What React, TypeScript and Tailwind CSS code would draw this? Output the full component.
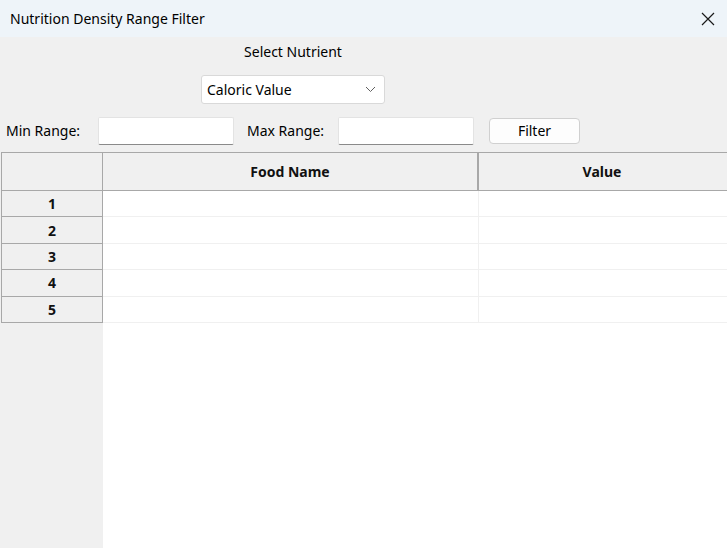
import React from "react";

const font = { fontFamily: '"Noto Sans", "Open Sans", sans-serif' };

const rows = [1, 2, 3, 4, 5];

export default function App() {
  return (
    <div className="w-[727px] h-[548px] overflow-hidden bg-[#f0f0f0] flex flex-col text-[14px] text-black" style={font}>
      {/* Title bar */}
      <div className="h-[37px] shrink-0 bg-[#eef4f9] flex items-center justify-between pl-[10px] pr-[11px]">
        <span className="text-[14px]">Nutrition Density Range Filter</span>
        <svg width="14" height="14" viewBox="0 0 14 14" className="mr-[1px]">
          <path d="M1 1 L13 13 M13 1 L1 13" stroke="#1a1a1a" strokeWidth="1.2" fill="none" />
        </svg>
      </div>

      {/* Nutrient selector */}
      <div className="flex flex-col items-center w-[586px] pt-[5px]">
        <span className="h-[20px] leading-[20px]">Select Nutrient</span>
        <div className="mt-[13px] w-[184px] h-[29px] bg-white border border-[#d9d9d9] rounded-[3px] flex items-center justify-between pl-[5px] pr-[8px]">
          <span>Caloric Value</span>
          <svg width="11" height="7" viewBox="0 0 11 7">
            <path d="M1 1 L5.5 5.5 L10 1" stroke="#606060" strokeWidth="1" fill="none" />
          </svg>
        </div>
      </div>

      {/* Range row */}
      <div className="flex items-center h-[29px] mt-[12px] pl-[6px]">
        <span className="w-[92px]">Min Range:</span>
        <div className="w-[136px] h-[28px] bg-white border border-[#e3e3e3] border-b-[#8a8a8a] rounded-[2px]" />
        <span className="ml-[13px] w-[91px]">Max Range:</span>
        <div className="w-[136px] h-[28px] bg-white border border-[#e3e3e3] border-b-[#8a8a8a] rounded-[2px]" />
        <div className="ml-[15px] w-[91px] h-[26px] bg-[#fdfdfd] border border-[#d0d0d0] rounded-[4px] flex items-center justify-center">
          Filter
        </div>
      </div>

      {/* Table */}
      <div className="flex-1 mt-[7px] ml-[1px] flex">
        <div className="w-[102px] shrink-0 bg-[#f0f0f0] flex flex-col">
          <div className="h-[39px] border border-[#a8a8a8] bg-[#f0f0f0]" />
          {rows.map((r) => (
            <div key={r} className="h-[26.4px] border border-t-0 border-[#a8a8a8] bg-[#f0f0f0] flex items-center justify-center font-bold text-[#111]">
              {r}
            </div>
          ))}
        </div>
        <div className="flex-1 bg-white flex flex-col">
          <div className="h-[39px] flex border-y border-[#a8a8a8] bg-[#f0f0f0] font-bold text-[#111]">
            <div className="w-[376px] shrink-0 border-r-2 border-[#a8a8a8] flex items-center justify-center">Food Name</div>
            <div className="flex-1 flex items-center justify-center pr-[2px]">Value</div>
          </div>
          {rows.map((r) => (
            <div key={r} className="h-[26.4px] flex border-b border-[#f0f0f0]">
              <div className="w-[376px] shrink-0 border-r border-[#f0f0f0]" />
              <div className="flex-1" />
            </div>
          ))}
        </div>
      </div>
    </div>
  );
}
